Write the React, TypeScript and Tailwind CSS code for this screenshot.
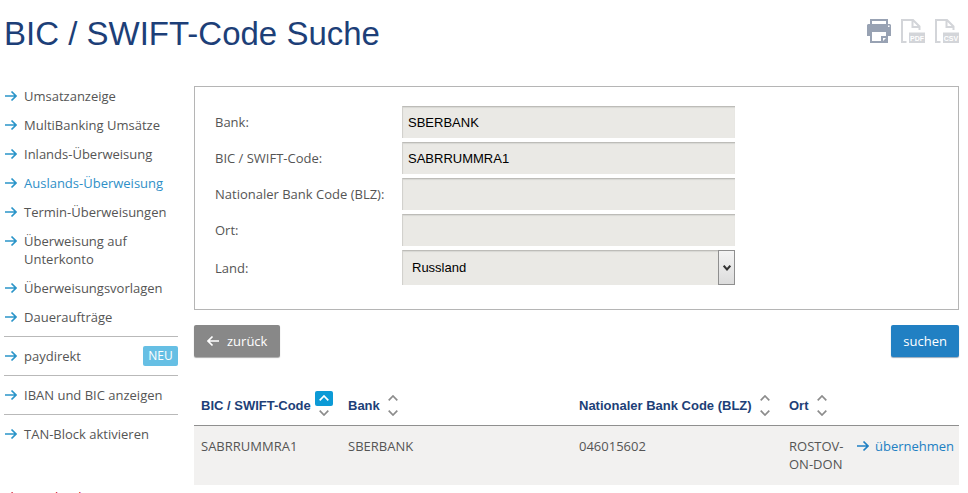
const navMain: { label: string; active?: boolean }[] = [
  { label: 'Umsatzanzeige' },
  { label: 'MultiBanking Umsätze' },
  { label: 'Inlands-Überweisung' },
  { label: 'Auslands-Überweisung', active: true },
  { label: 'Termin-Überweisungen' },
  { label: 'Überweisung auf Unterkonto' },
  { label: 'Überweisungsvorlagen' },
  { label: 'Daueraufträge' },
];

const navExtra: { label: string; badge?: string }[] = [
  { label: 'paydirekt', badge: 'NEU' },
  { label: 'IBAN und BIC anzeigen' },
  { label: 'TAN-Block aktivieren' },
];

const fields = [
  { id: 'bank', label: 'Bank:', value: 'SBERBANK' },
  { id: 'bic', label: 'BIC / SWIFT-Code:', value: 'SABRRUMMRA1' },
  { id: 'blz', label: 'Nationaler Bank Code (BLZ):', value: '' },
  { id: 'ort', label: 'Ort:', value: '' },
];

function Arrow({ className = '' }: { className?: string }) {
  return (
    <svg viewBox="0 0 12 12" className={`h-3 w-3 shrink-0 ${className}`} fill="none" stroke="currentColor" strokeWidth="1.7" aria-hidden="true">
      <path d="M0 6H11M6.5 1.5L11 6L6.5 10.5" />
    </svg>
  );
}

function NavLink({ label, active, badge }: { label: string; active?: boolean; badge?: string }) {
  return (
    <a href="#" className={`flex items-start ${active ? 'text-[#2f8fc7]' : 'text-[#555555]'}`}>
      <Arrow className="mt-[3px] mr-[7px] ml-px text-[#2b95c9]" />
      <span className="grow">{label}</span>
      {badge && (
        <span className="-my-px h-5 w-[35px] rounded-xs bg-[#66bfe4] text-center text-xs leading-5 text-white">{badge}</span>
      )}
    </a>
  );
}

function Chevron({ down = false }: { down?: boolean }) {
  return (
    <svg viewBox="0 0 10 6" className="h-1.5 w-2.5" fill="none" stroke="currentColor" strokeWidth="1.7" aria-hidden="true">
      <path d={down ? 'M0.7 0.7L5 5L9.3 0.7' : 'M0.7 5.3L5 1L9.3 5.3'} />
    </svg>
  );
}

function SortHeader({ label, active = false }: { label: string; active?: boolean }) {
  return (
    <div className="flex items-center gap-1">
      <span>{label}</span>
      <span className="flex flex-col items-center">
        <button
          type="button"
          aria-label={`${label} aufsteigend sortieren`}
          className={`flex h-[15px] w-[18px] items-center justify-center rounded-xs ${active ? 'bg-[#0c9ad6] text-white' : 'text-[#8c8c8c]'}`}
        >
          <Chevron />
        </button>
        <button type="button" aria-label={`${label} absteigend sortieren`} className="flex h-[15px] w-[18px] items-center justify-center text-[#8c8c8c]">
          <Chevron down />
        </button>
      </span>
    </div>
  );
}

function PrinterIcon() {
  return (
    <svg viewBox="0 0 24 24" className="h-6 w-6" aria-hidden="true">
      <path fill="#98a2b3" fillRule="evenodd" d="M3 0H21V5H23L24 6V17H21V24H3V17H0V6L1 5H3ZM5 2V5H19V2ZM5 13V22H14V17H19V13ZM21 6.5V8H22.500V6.500ZM16 19V22L19 19Z" />
    </svg>
  );
}

function FileIcon({ type }: { type: string }) {
  return (
    <svg viewBox="0 0 24 24" className="h-6 w-6" aria-hidden="true">
      <path d="M5.500 23H1V1H12L18.500 7.500V11M11.500 1V8H18.500" fill="none" stroke="#d3d5d9" strokeWidth="2" />
      <rect x="8" y="13.500" width="16" height="10.500" fill="#d3d5d9" />
      <text x="16" y="21.500" textAnchor="middle" fontSize="7" fontWeight="700" fill="white">{type}</text>
    </svg>
  );
}

const control =
  'w-full border-t border-l border-t-[#bdbcb8] border-l-[#d2d1cd] bg-[#eae9e5] font-["Liberation_Sans",Arial,sans-serif] text-[13px] text-black shadow-[inset_0_1px_1px_#d8d7d3]';

export default function App() {
  return (
    <div className="h-screen overflow-hidden bg-white pr-[9px] pl-1 font-['Open_Sans',sans-serif] text-[13px] leading-[18px] text-[#555555]">
      <header className="flex items-start justify-between pt-3">
        <h1 className="font-['Liberation_Sans',Arial,sans-serif] text-[33px] leading-[44px] text-[#1d3f78]">BIC / SWIFT-Code Suche</h1>
        <div className="flex gap-2.5 pt-[7px] font-['Liberation_Sans',Arial,sans-serif]">
          <button type="button" aria-label="Drucken"><PrinterIcon /></button>
          <button type="button" aria-label="Als PDF speichern"><FileIcon type="PDF" /></button>
          <button type="button" aria-label="Als CSV speichern"><FileIcon type="CSV" /></button>
        </div>
      </header>

      <div className="mt-[30px] flex gap-4">
        <nav className="w-[174px] shrink-0 pt-px">
          <ul className="flex flex-col gap-[11px] pb-2.5">
            {navMain.map((item) => (
              <li key={item.label}><NavLink {...item} /></li>
            ))}
          </ul>
          <ul>
            {navExtra.map((item) => (
              <li key={item.label} className="border-t border-[#b9b9b9] py-2.5"><NavLink {...item} /></li>
            ))}
          </ul>
          <a href="#" className="mt-[35px] flex items-start text-[#d0021b]">
            <Arrow className="mt-[3px] mr-[7px] ml-px" />
            <span>Hausbank</span>
          </a>
        </nav>

        <main className="min-w-0 grow">
          <form>
            <div className="flex flex-col gap-1 border border-[#b5b5b5] pt-[19px] pr-5 pb-6 pl-5">
              {fields.map((f) => (
                <div key={f.id} className="flex items-center">
                  <label htmlFor={f.id} className="w-[187px] shrink-0">{f.label}</label>
                  <div className="w-[333px]">
                    <input id={f.id} defaultValue={f.value} className={`${control} block h-8 px-[5px]`} />
                  </div>
                </div>
              ))}
              <div className="flex items-center">
                <label htmlFor="land" className="w-[187px] shrink-0">Land:</label>
                <div className="relative w-[333px]">
                  <select id="land" className={`${control} block h-[35px] appearance-none px-[9px]`}>
                    <option>Russland</option>
                  </select>
                  <span className="pointer-events-none absolute inset-y-0 right-0 flex w-[17px] items-center justify-center border border-[#8f8f8f] bg-linear-to-b from-[#f4f4f4] to-[#dcdcdc] text-[#333333]">
                    <svg viewBox="0 0 8 6" className="h-1.5 w-2" fill="none" stroke="currentColor" strokeWidth="2" aria-hidden="true">
                      <path d="M0.7 0.7L4 4.500L7.300 0.700" />
                    </svg>
                  </span>
                </div>
              </div>
            </div>
            <div className="mt-[15px] flex justify-between text-white">
              <button type="button" className="flex h-8 items-center gap-2 rounded-xs bg-[#888888] px-[13px] shadow-[0_1px_1px_#aaaaaa]">
                <Arrow className="rotate-180" />
                zurück
              </button>
              <button type="submit" className="h-8 rounded-xs bg-[#2180c3] px-3 shadow-[0_1px_1px_#9ab]">suchen</button>
            </div>
          </form>

          <table className="mt-7 w-full table-fixed text-left">
            <colgroup>
              <col className="w-[147px]" />
              <col />
              <col className="w-[210px]" />
              <col className="w-[68px]" />
              <col className="w-[109px]" />
            </colgroup>
            <thead className="border-b border-[#8f8f8f] font-['Liberation_Sans',Arial,sans-serif] text-[13px] whitespace-nowrap text-[#1d3f78]">
              <tr className="h-10">
                <th className="pt-0.5 pl-[7px]"><SortHeader label="BIC / SWIFT-Code" active /></th>
                <th className="pt-0.5 pl-[7px]"><SortHeader label="Bank" /></th>
                <th className="pt-0.5 pl-[7px]"><SortHeader label="Nationaler Bank Code (BLZ)" /></th>
                <th className="pt-0.5 pl-[7px]"><SortHeader label="Ort" /></th>
                <th aria-label="Aktion" />
              </tr>
            </thead>
            <tbody className="bg-[#f2f1f0] align-top">
              <tr>
                <td className="pt-[11px] pb-3 pl-[7px]">SABRRUMMRA1</td>
                <td className="pt-[11px] pb-3 pl-[7px]">SBERBANK</td>
                <td className="pt-[11px] pb-3 pl-[7px]">046015602</td>
                <td className="pt-[11px] pb-3 pl-[7px]">ROSTOV-ON-DON</td>
                <td className="pt-[11px] pb-3 pl-[7px]">
                  <a href="#" className="flex items-center gap-1.5 text-[#2180c3]"><Arrow />übernehmen</a>
                </td>
              </tr>
            </tbody>
          </table>
        </main>
      </div>
    </div>
  );
}
